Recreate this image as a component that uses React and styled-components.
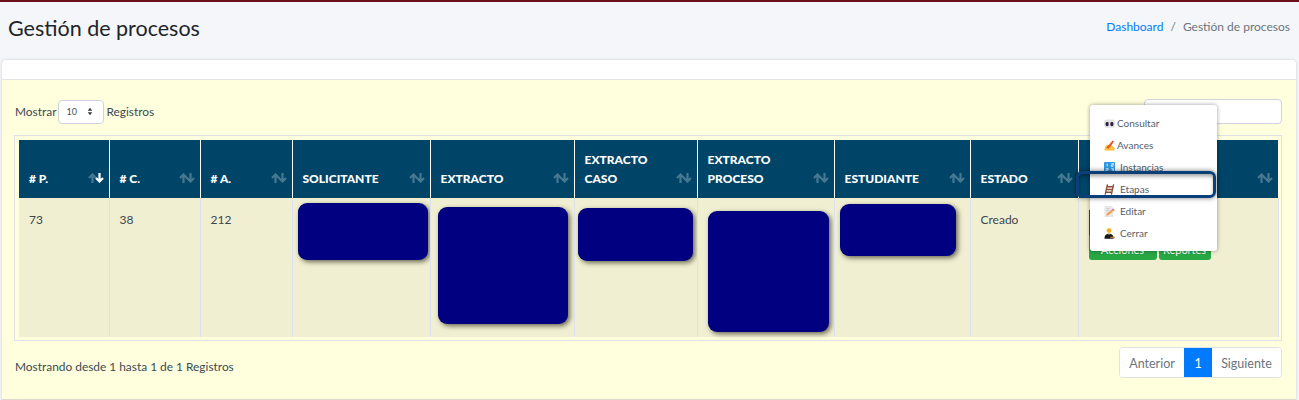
import styled, { createGlobalStyle } from "styled-components";

const GlobalStyle = createGlobalStyle`
  html, body {
    margin: 0;
    padding: 0;
    background: #f4f6f9;
    font-family: "Lato", "Noto Sans", sans-serif;
    color: #212529;
    overflow: hidden;
  }
`;

const columns = [
  { label: ["# P."], width: 90, value: "73" },
  { label: ["# C."], width: 91, value: "38" },
  { label: ["# A."], width: 92, value: "212" },
  { label: ["SOLICITANTE"], width: 138, mask: { w: 130, h: 57, mt: 5, ml: 5 } },
  { label: ["EXTRACTO"], width: 144, mask: { w: 130, h: 117, mt: 9, ml: 7 } },
  { label: ["EXTRACTO", "CASO"], width: 123, mask: { w: 115, h: 53, mt: 10, ml: 3 } },
  { label: ["EXTRACTO", "PROCESO"], width: 137, mask: { w: 121, h: 121, mt: 13, ml: 10 } },
  { label: ["ESTUDIANTE"], width: 136, mask: { w: 116, h: 52, mt: 6, ml: 5 } },
  { label: ["ESTADO"], width: 108, value: "Creado" },
  { label: [""], width: 200, actions: true },
];

const SortArrows = ({ active }) => (
  <SortIcon viewBox="0 0 16 10" aria-hidden="true">
    <path d="M4.500 10V2M1 5l3.500-3.500L8 5" fill="none" stroke="#fff" strokeOpacity=".28" strokeWidth="2.200" />
    <path
      d="M11.500 0v8M8 5l3.500 3.500L15 5"
      fill="none"
      stroke="#fff"
      strokeOpacity={active ? 1 : 0.28}
      strokeWidth="2.200"
    />
  </SortIcon>
);

const Eyes = () => (
  <MenuIcon viewBox="0 0 12 12">
    <rect x=".3" y="1.500" width="11.400" height="9" rx="2" fill="#e6e6ea" />
    <ellipse cx="3.400" cy="6" rx="2.400" ry="3.300" fill="#fff" stroke="#bbb" strokeWidth=".4" />
    <ellipse cx="8.600" cy="6" rx="2.400" ry="3.300" fill="#fff" stroke="#bbb" strokeWidth=".4" />
    <ellipse cx="3.400" cy="6.600" rx="1.800" ry="2.400" fill="#2d2440" />
    <ellipse cx="8.600" cy="6.600" rx="1.800" ry="2.400" fill="#2d2440" />
  </MenuIcon>
);

const Writing = () => (
  <MenuIcon viewBox="0 0 12 12">
    <path d="M.5 11.500c0-3 1-5 3-6.500l2.500 1 2-.5 3.500 3v3z" fill="#fbbf3c" />
    <path d="M2.500 8.500 9.500.5l1.500 1.200L5 9.500z" fill="#e2542a" />
  </MenuIcon>
);

const Numbers = () => (
  <MenuIcon viewBox="0 0 12 12">
    <rect width="12" height="12" rx="1" fill="#2f97e4" />
    <path
      d="M3.500 1.800v3M8 1.800h2.300v1.500H8v1.500h2.300M2 7.300h2.500v1.500H2v1.500h2.500M8 7.300h2.300v3H8M8.500 8.800h1.800"
      fill="none"
      stroke="#fff"
      strokeWidth=".9"
    />
  </MenuIcon>
);

const Ladder = () => (
  <MenuIcon viewBox="0 0 12 12">
    <path
      d="M3.800 .3 1.300 11.700M10.500 .3 8 11.700M3 3h7M2.400 6h7M1.800 9h7"
      fill="none"
      stroke="#8a4b38"
      strokeWidth="1.500"
    />
  </MenuIcon>
);

const Memo = () => (
  <MenuIcon viewBox="0 0 12 12">
    <path d="M1 .3h6.500l2 2v9.400H1z" fill="#ece8ef" stroke="#ccc" strokeWidth=".4" />
    <path d="M2.500 3h4M2.500 5h3" stroke="#b8aec4" strokeWidth=".6" />
    <path d="m2.500 10.500.6-2.300 5.500-4.500 1.700 1.800-5.400 4.500z" fill="#f6a04d" />
    <path d="m8.800 3.500 1-.8 1.900 1.800-1 .9z" fill="#e8437a" />
  </MenuIcon>
);

const Judge = () => (
  <MenuIcon viewBox="0 0 12 12">
    <circle cx="5.500" cy="2.800" r="2.600" fill="#f7ad1e" />
    <path d="M.5 11.800c0-4 2-5.500 5-5.500s5 1.500 5 5.500z" fill="#161616" />
    <path d="M4.500 6.300h2L5.500 8.300z" fill="#f7ad1e" />
    <path d="M7 9.500h4.800v1.500H7z" fill="#b78a3a" />
  </MenuIcon>
);

const menuItems = [
  { label: "Consultar", icon: <Eyes />, gap: 2 },
  { label: "Avances", icon: <Writing />, gap: 2 },
  { label: "Instancias", icon: <Numbers />, gap: 5 },
  { label: "Etapas", icon: <Ladder />, gap: 5 },
  { label: "Editar", icon: <Memo />, gap: 5 },
  { label: "Cerrar", icon: <Judge />, gap: 5 },
];

const App = () => (
  <>
    <GlobalStyle />
    <TopLine />
    <Header>
      <Title>Gestión de procesos</Title>
      <Breadcrumb>
        <a href="#dashboard">Dashboard</a>
        <Separator>/</Separator>
        <span>Gestión de procesos</span>
      </Breadcrumb>
    </Header>
    <Card>
      <CardHeader />
      <CardBody>
        <Controls>
          <LengthLabel>
            Mostrar
            <FakeSelect>
              10
              <SelectArrows viewBox="0 0 8 12" aria-hidden="true">
                <path d="M4 1 7 5H1zM4 11 1 7h6z" fill="#343a40" />
              </SelectArrows>
            </FakeSelect>
            Registros
          </LengthLabel>
          <SearchInput aria-label="Buscar" />
        </Controls>
        <TableFrame>
          <Table>
            <colgroup>
              {columns.map((col, i) => (
                <col key={i} width={col.width} />
              ))}
            </colgroup>
            <thead>
              <tr>
                {columns.map((col, i) => (
                  <HeadCell key={i}>
                    {col.label.map((line) => (
                      <div key={line}>{line}</div>
                    ))}
                    <SortArrows active={i === 0} />
                  </HeadCell>
                ))}
              </tr>
            </thead>
            <tbody>
              <tr>
                {columns.map((col, i) => (
                  <BodyCell key={i} $flush={!!col.mask || col.actions}>
                    {col.value}
                    {col.mask && <Redacted $w={col.mask.w} $h={col.mask.h} $mt={col.mask.mt} $ml={col.mask.ml} />}
                    {col.actions && (
                      <Actions>
                        <ToggleButton />
                        <ButtonRow>
                          <GreenButton $w={68}>Acciones</GreenButton>
                          <GreenButton $w={52}>Reportes</GreenButton>
                        </ButtonRow>
                      </Actions>
                    )}
                  </BodyCell>
                ))}
              </tr>
            </tbody>
          </Table>
          <Menu>
            {menuItems.map((item) => (
              <MenuItem key={item.label} $gap={item.gap}>
                {item.icon}
                {item.label}
              </MenuItem>
            ))}
          </Menu>
          <Highlight />
        </TableFrame>
        <Footer>
          <FooterText>Mostrando desde 1 hasta 1 de 1 Registros</FooterText>
          <Pagination>
            <PageButton $w={64}>Anterior</PageButton>
            <PageButton $w={28} $active>
              1
            </PageButton>
            <PageButton $w={69}>Siguiente</PageButton>
          </Pagination>
        </Footer>
      </CardBody>
    </Card>
  </>
);

const TopLine = styled.div`
  height: 2px;
  background: #6d0f1c;
`;

const Header = styled.header`
  height: 58px;
  padding: 0 9px 0 8px;
  display: flex;
  align-items: center;
  justify-content: space-between;
  box-sizing: border-box;
`;

const Title = styled.h1`
  margin: 0 0 6px;
  font-size: 21.500px;
  font-weight: 400;
  color: #212529;
`;

const Breadcrumb = styled.nav`
  display: flex;
  font-size: 12px;
  color: #6c757d;
  margin-bottom: 10px;

  a {
    color: #007bff;
    text-decoration: none;
  }
`;

const Separator = styled.span`
  margin: 0 7px;
`;

const Card = styled.section`
  margin: 0 3px 0 2px;
  border-radius: 4px 4px 0 0;
  box-shadow: 0 0 3px rgba(0, 0, 0, 0.18);
  background: #fff;
`;

const CardHeader = styled.div`
  height: 19px;
  border-bottom: 1px solid #e4e4e0;
`;

const CardBody = styled.div`
  background: #ffffdd;
  height: 320px;
  padding: 19px 14px 0 12px;
  box-sizing: border-box;
  color: #3a4a55;
  font-size: 11.900px;
  border-bottom: 1px solid #d9d9d2;
`;

const Controls = styled.div`
  display: flex;
  justify-content: space-between;
  align-items: center;
  height: 25px;
  margin-bottom: 11px;
`;

const LengthLabel = styled.label`
  display: flex;
  align-items: center;
  gap: 2px;
  padding-left: 1px;
`;

const FakeSelect = styled.div`
  width: 46px;
  height: 24px;
  box-sizing: border-box;
  padding: 0 7px;
  display: flex;
  align-items: center;
  justify-content: space-between;
  font-size: 9px;
  color: #495057;
  background: #fff;
  border: 1px solid #ced4da;
  border-radius: 4px;
`;

const SelectArrows = styled.svg`
  width: 6px;
  height: 9px;
  margin-right: 3px;
`;

const SearchInput = styled.input`
  width: 138px;
  height: 25px;
  box-sizing: border-box;
  background: #fff;
  border: 1px solid #ced4da;
  border-radius: 4px;
`;

const TableFrame = styled.div`
  position: relative;
  border: 1px solid #dee2e6;
  padding: 4px 3px 3px 4px;
`;

const Table = styled.table`
  table-layout: fixed;
  width: 1259px;
  border-collapse: collapse;
`;

const HeadCell = styled.th`
  position: relative;
  height: 58px;
  box-sizing: border-box;
  padding: 0 30px 10px 10px;
  vertical-align: bottom;
  text-align: left;
  background: #004567;
  color: #fff;
  font-size: 12px;
  line-height: 19px;
  font-weight: 900;
  border-left: 1px solid #fff;
  white-space: nowrap;

  &:first-child {
    border-left: 0;
  }
`;

const SortIcon = styled.svg`
  position: absolute;
  right: 5px;
  bottom: 15px;
  width: 16px;
  height: 10px;
`;

const BodyCell = styled.td`
  height: 139px;
  box-sizing: border-box;
  padding: ${(props) => (props.$flush ? "0" : "14px 10px")};
  vertical-align: top;
  background: #f1efd1;
  color: #3d4650;
  font-size: 12px;
  border-left: 1px solid #dde0ee;
  border-right: 1px solid #dde0ee;

  &:first-child {
    border-left: 0;
  }
`;

const Redacted = styled.div`
  width: ${(props) => props.$w}px;
  height: ${(props) => props.$h}px;
  margin: ${(props) => props.$mt}px 0 0 ${(props) => props.$ml}px;
  background: navy;
  border-radius: 9px;
  box-shadow: 2px 2px 5px rgba(60, 60, 40, 0.75);
`;

const Actions = styled.div`
  padding: 12px 0 0 10px;
  width: 124px;
`;

const ToggleButton = styled.div`
  width: 68px;
  height: 25px;
  background: #1b5e2a;
`;

const ButtonRow = styled.div`
  display: flex;
  gap: 2px;
`;

const GreenButton = styled.div`
  width: ${(props) => props.$w}px;
  height: 25px;
  box-sizing: border-box;
  text-align: center;
  font-size: 11px;
  line-height: 30px;
  color: #fff;
  background: #28a745;
  border-radius: 0 0 3px 3px;
`;

const Menu = styled.div`
  position: absolute;
  top: -31px;
  left: 1075px;
  width: 127px;
  height: 146px;
  box-sizing: border-box;
  padding: 7px 0 0 14px;
  background: #fff;
  border-radius: 3px;
  box-shadow: 0 0 4px rgba(0, 0, 0, 0.4);
`;

const MenuItem = styled.div`
  display: flex;
  align-items: center;
  height: 22px;
  gap: ${(props) => props.$gap}px;
  font-size: 10px;
  color: #55606a;
`;

const MenuIcon = styled.svg`
  width: 11px;
  height: 11px;
  flex: none;
`;

const Highlight = styled.div`
  position: absolute;
  top: 35px;
  left: 1061px;
  width: 140px;
  height: 27px;
  box-sizing: border-box;
  border: 3px solid #0a3f7a;
  border-radius: 6px;
  box-shadow: 0 0 5px rgba(0, 0, 0, 0.55), inset 0 3px 4px -1px rgba(0, 0, 0, 0.4);
`;

const Footer = styled.div`
  display: flex;
  justify-content: space-between;
  align-items: flex-start;
  margin-top: 6px;
`;

const FooterText = styled.span`
  padding: 12px 0 0 1px;
`;

const Pagination = styled.div`
  display: flex;
  height: 31px;
  box-sizing: border-box;
  border: 1px solid #dee2e6;
  border-radius: 4px;
  background: #fff;
  overflow: hidden;
`;

const PageButton = styled.div`
  display: flex;
  align-items: center;
  justify-content: center;
  padding-top: 1px;
  width: ${(props) => props.$w}px;
  font-size: 12.500px;
  color: ${(props) => (props.$active ? "#fff" : "#6c757d")};
  background: ${(props) => (props.$active ? "#007bff" : "#fff")};
`;

export default App;
